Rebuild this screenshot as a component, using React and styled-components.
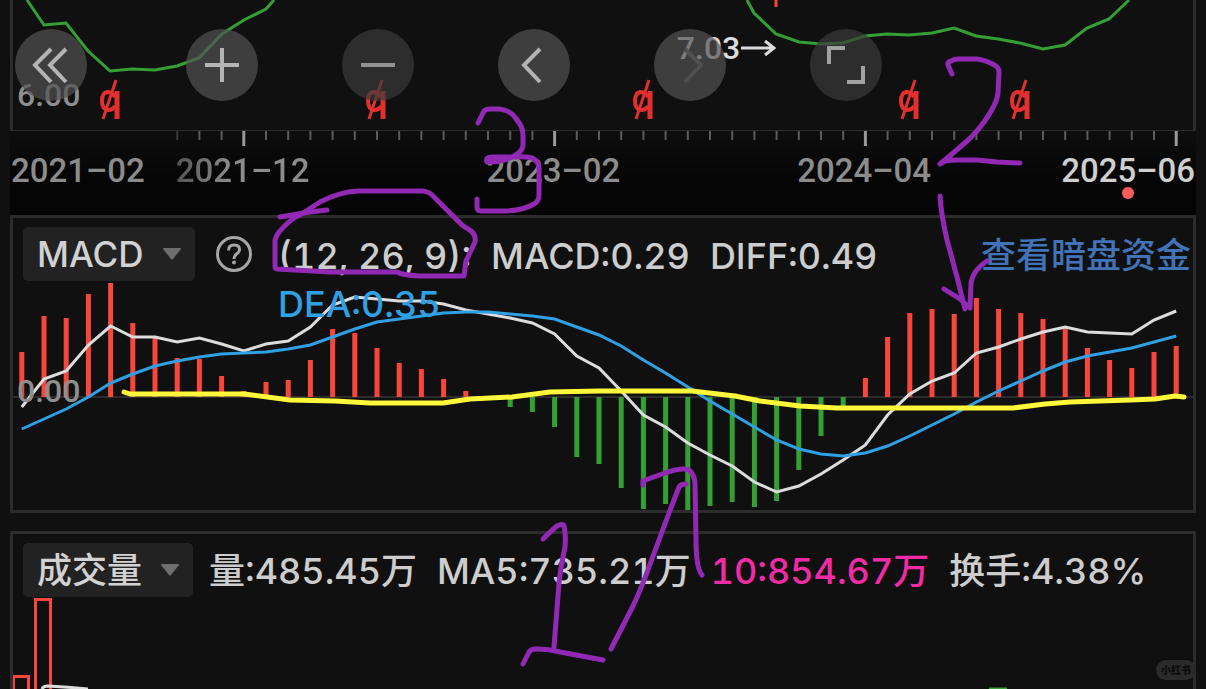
import React from 'react';
import styled, { createGlobalStyle } from 'styled-components';

const GlobalStyle = createGlobalStyle`
  * {
    box-sizing: border-box;
  }
  body {
    margin: 0;
    background: #101010;
    font-family: Inter, 'Noto Sans CJK SC', sans-serif;
  }
`;

const Page = styled.main`
  position: relative;
  display: flex;
  flex-direction: column;
  height: 100vh;
  padding: 0 10px;
  overflow: hidden;
`;

const PricePanel = styled.section`
  position: relative;
  flex: none;
  border: solid #2c2c2c;
  border-width: 0 3px 1px;
`;

const Panel = styled.section`
  display: flex;
  flex-direction: column;
  flex: ${(p) => (p.$grow ? '1 0 auto' : 'none')};
  border: 3px solid #2c2c2c;
`;

const MacdPanel = styled(Panel)`
  position: relative;
  height: 298px;
  margin-bottom: 18px;
`;

const VolumePanel = styled(Panel)`
  border-bottom: 0;
`;

const Chart = styled.svg`
  display: block;
  width: 100%;
  height: ${(p) => p.$height}px;

  path,
  line,
  rect {
    vector-effect: non-scaling-stroke;
  }
`;

const MacdChart = styled(Chart)`
  position: absolute;
  inset: 0;
`;

const AxisValue = styled.span`
  position: absolute;
  left: 4px;
  top: ${(p) => p.$top}px;
  font: 500 32px/36px Roboto, sans-serif;
  color: #8e8e8e;
`;

const LowMark = styled.div`
  position: absolute;
  left: 56%;
  top: 30px;
  display: flex;
  align-items: center;
  padding-left: 3px;
  font: 500 32px/36px Roboto, sans-serif;
  color: #dcdcdc;
`;

const Toolbar = styled.div`
  position: absolute;
  left: 2px;
  top: 29px;
  display: flex;
  gap: 84px;

  button:first-child {
    margin-right: 15px;
  }
`;

const RoundButton = styled.button`
  display: grid;
  place-items: center;
  width: 72px;
  height: 72px;
  padding: 0;
  border: 0;
  border-radius: 50%;
  background: ${(p) => (p.$dim ? 'rgba(58, 58, 58, 0.7)' : 'rgba(82, 82, 82, 0.7)')};
  color: ${(p) => p.$ink || '#b4b4b4'};
`;

const Timeline = styled.section`
  flex: none;
  height: 84px;
  background: linear-gradient(#0e0e0e, #050505 60%);
`;

const Dates = styled.div`
  display: grid;
  grid-template-columns: 165fr 311fr 311fr 264fr 134fr;
  padding: 4px 1px 0;
`;

const DateLabel = styled.time`
  position: relative;
  justify-self: ${(p) => (p.$last ? 'end' : 'start')};
  font: 500 33px/40px Roboto, sans-serif;
  white-space: nowrap;
  color: ${(p) => (p.$last ? '#cfcfcf' : '#8c8c8c')};
`;

const FadedDate = styled(DateLabel)`
  background: linear-gradient(90deg, #555, #8c8c8c 40%);
  background-clip: text;
  color: transparent;
`;

const Dot = styled.i`
  position: absolute;
  left: 50%;
  bottom: -8px;
  width: 12px;
  height: 12px;
  margin-left: -6px;
  border-radius: 50%;
  background: #ff5b5b;
`;

const PanelHeader = styled.header`
  position: relative;
  z-index: 1;
  display: flex;
  align-items: flex-start;
  padding: 9px 2px 0 10px;
`;

const Picker = styled.label`
  position: relative;
  flex: none;

  svg {
    position: absolute;
    right: 14px;
    top: 21px;
    pointer-events: none;
  }
`;

const PickerSelect = styled.select`
  appearance: none;
  display: block;
  width: ${(p) => p.$width}px;
  height: 54px;
  padding: 0 14px;
  border: 0;
  border-radius: 5px;
  background: #222;
  color: #d2d2d2;
  font: 500 35px/54px Inter, 'Noto Sans CJK SC', sans-serif;
`;

const HelpButton = styled.button`
  flex: none;
  width: 36px;
  height: 36px;
  margin: 9px 26px 0 21px;
  padding: 0;
  border: 0;
  background: none;
  color: #a6a6a6;
`;

const Legend = styled.div`
  display: flex;
  flex: 1;
  flex-wrap: wrap;
  column-gap: 20px;
  font-size: 36px;
  font-weight: 500;
  font-variant-numeric: tabular-nums;
  line-height: 48px;
  color: #cdcdcd;
`;

const MacdLegend = styled(Legend)`
  padding-top: 5px;
`;

const VolumeLegend = styled(Legend)`
  flex-wrap: nowrap;
  padding: 4px 0 0 16px;
`;

const Value = styled.span`
  white-space: nowrap;
  color: ${(p) => p.$color || 'inherit'};
`;

const FundsLink = styled.a`
  flex: none;
  font-size: 35px;
  font-weight: 500;
  line-height: 48px;
  padding-top: 4px;
  color: #4173b8;
  text-decoration: none;
`;

const Sketch = styled.svg`
  position: absolute;
  left: 0;
  top: 0;
  z-index: 2;
  width: 100%;
  height: 689px;
  pointer-events: none;

  path {
    vector-effect: non-scaling-stroke;
  }
`;

const Watermark = styled.span`
  position: absolute;
  right: 10px;
  bottom: 9px;
  z-index: 3;
  padding: 0 5px;
  border-radius: 10px;
  background: #2b2b2b;
  color: #0a0a0a;
  font-size: 10px;
  font-weight: 900;
  line-height: 20px;
`;

const STEP = 22.2;
const FIRST = 21.8;
const ZERO = 397;
const barX = (i) => FIRST + STEP * i;

const histogram = [
  352, 316, 318, 294, 283, 323, 338, 358, 359, 376, 391, 382, 380, 360, 329, 333, 348, 363,
  369, 379, 391, 397, 407, 412, 427, 457, 464, 488, 509, 504, 510, 506, 502, 507, 501, 470,
  436, 406, 378, 337, 313, 309, 314, 298, 309, 313, 319, 327, 348, 360, 368, 352, 346,
];

const diff = [
  407, 379, 371, 345, 326, 337, 337, 342, 338, 344, 351, 344, 341, 327, 305, 297, 299, 301,
  301, 304, 310, 314, 318, 323, 334, 356, 368, 391, 415, 427, 443, 455, 466, 482, 492, 486,
  474, 460, 445, 415, 394, 381, 373, 353, 347, 339, 332, 327, 332, 333, 334, 320, 311,
];

const dea = [
  429, 419, 409, 397, 383, 374, 366, 361, 357, 354, 353, 352, 349, 345, 337, 329, 322, 319,
  316, 313, 312, 312, 314, 316, 319, 327, 335, 346, 360, 373, 387, 401, 414, 427, 440, 449,
  454, 456, 453, 446, 436, 425, 414, 402, 391, 381, 371, 362, 356, 352, 348, 342, 336,
];

const toPath = (values) => values.map((y, i) => `${i ? 'L' : 'M'}${barX(i)} ${y}`).join(' ');

const rightsMarks = [110, 376, 643, 909, 1020];

const strokes = [
  // 3
  'M478 123L484 111Q486 109 490 109H499Q511 110 517 120Q523 127 523 135V145Q523 150 517 154Q506 162 487 162Q485 157 492 157H515Q530 156 534 159Q539 163 539 168V195Q539 201 534 204Q522 211 502 211H481Q477 211 477 207V199',
  // loop round the parameters
  'M327 210L310 212L280 217',
  'M300 215L320 202Q342 191 358 191H422Q429 191 434 197L452 215L462 225L471 231Q476 235 475 242L466 261L464 276H419Q402 275 397 272H330L277 269Q275 269 275 265V240Q276 236 279 232Q290 219 300 215',
  // 2
  'M952 74L948 65Q947 62 951 61Q954 59 958 59H977Q989 61 996 66Q999 68 999 72L998 93Q997 104 984 122Q975 134 967 141L952 154L940 164L945 161Q950 160 957 160H977L997 162L1020 163',
  'M940 196Q941 214 947 240L957 277L965 309',
  'M944 289L960 299L970 308L971 283Q973 270 987 261',
  // 1
  'M543 539Q552 530 557 526Q563 523 564 526Q566 535 565 547Q560 572 559 583L554 647',
  'M523 664L529 652Q531 649 536 649Q549 649 560 652L603 660',
  'M611 649L632 608Q640 592 649 567L669 513L679 487Q681 484 686 484',
  'M643 485V481Q648 479 665 473Q682 467 689 470Q695 475 695 485L696 540Q696 568 702 575',
];

function Caret() {
  return (
    <svg width="18" height="12" viewBox="0 0 18 12" aria-hidden="true">
      <path d="M1 0H17Q18 0 18 1L10 11Q9 12 8 11L0 1Q0 0 1 0Z" fill="#6e6e6e" />
    </svg>
  );
}

function Glyph({ d, width = 4 }) {
  return (
    <svg width="72" height="72" viewBox="0 0 72 72" fill="none" stroke="currentColor" strokeWidth={width}>
      <path d={d} />
    </svg>
  );
}

function Price() {
  return (
    <PricePanel>
      <Chart $height={130} viewBox="13 0 1180 130" preserveAspectRatio="none" fill="none">
        <path
          stroke="#34a034"
          strokeWidth="3"
          d="M27 0L44 25L66 23L88 51L110 71L132 69L155 70L177 66L199 58L222 34L244 20L266 9L274 0M747 0L754 13L776 34L799 42L821 44L843 43L865 36L887 34L909 35L932 33L954 28L976 36L998 39L1020 43L1043 49L1065 45L1087 28L1109 19L1129 0"
        />
        <path stroke="#f5443a" strokeWidth="3" d="M776 0V7" />
        {rightsMarks.map((x) => (
          <g key={x} stroke="#e3302f">
            <path d={`M${x + 7} 91V119`} strokeWidth="5" />
            <path
              d={`M${x + 5} 97Q${x + 2} 92 ${x - 3} 92Q${x - 8} 93 ${x - 8} 101Q${x - 8} 109 ${x - 2} 110Q${x + 3} 110 ${x + 5} 106`}
              strokeWidth="4"
            />
            <path d={`M${x + 6} 80L${x - 7} 119`} strokeWidth="3" />
          </g>
        ))}
      </Chart>
      <AxisValue $top={77}>6.00</AxisValue>
      <LowMark>
        7.03
        <svg width="36" height="20" viewBox="0 0 36 20" fill="none" stroke="currentColor" strokeWidth="3">
          <path d="M1 10H34M25 3L34 10L25 17" />
        </svg>
      </LowMark>
      <Toolbar>
        <RoundButton aria-label="Jump back">
          <Glyph d="M36 20L20 36L36 53M51 20L35 36L51 53" />
        </RoundButton>
        <RoundButton aria-label="Zoom in">
          <Glyph d="M19 36H53M36 19V53" />
        </RoundButton>
        <RoundButton aria-label="Zoom out" $dim $ink="#929292">
          <Glyph d="M19 36H53" />
        </RoundButton>
        <RoundButton aria-label="Previous">
          <Glyph d="M42 20L26 36L42 53" />
        </RoundButton>
        <RoundButton aria-label="Next" $ink="#505050">
          <Glyph d="M31 20L47 36L31 53" />
        </RoundButton>
        <RoundButton aria-label="Full screen" $dim $ink="#a2a2a2">
          <Glyph d="M19 35V19H35M53 37V53H37" />
        </RoundButton>
      </Toolbar>
    </PricePanel>
  );
}

function TimeAxis() {
  const ticks = [];
  for (let i = 7; i <= 52; i += 1) {
    const major = i % 14 === 10;
    ticks.push(
      <line
        key={i}
        x1={barX(i)}
        x2={barX(i)}
        y1="0"
        y2={major ? 15 : 9}
        stroke={major ? '#9a9a9a' : i === 7 ? '#3a3a3a' : '#5c5c5c'}
        strokeWidth={major ? 3 : 2}
      />
    );
  }
  return (
    <Timeline>
      <Chart $height={16} viewBox="10 0 1186 16" preserveAspectRatio="none">
        {ticks}
      </Chart>
      <Dates>
        <DateLabel>2021–02</DateLabel>
        <FadedDate>2021–12</FadedDate>
        <DateLabel>2023–02</DateLabel>
        <DateLabel>2024–04</DateLabel>
        <DateLabel $last>
          2025–06
          <Dot />
        </DateLabel>
      </Dates>
    </Timeline>
  );
}

function Macd() {
  return (
    <MacdPanel>
      <MacdChart $height={292} viewBox="13 218 1180 292" preserveAspectRatio="none" fill="none">
        <line x1="13" x2="1193" y1="397" y2="397" stroke="#2c2c2c" strokeWidth="2" />
        {histogram.map((y, i) => (
          <rect
            key={i}
            x={barX(i) - 2.5}
            y={Math.min(y, ZERO)}
            width="5"
            height={Math.abs(y - ZERO)}
            fill={y < ZERO ? '#f9463a' : '#34a034'}
          />
        ))}
        <path d={toPath(diff)} stroke="#dcdcdc" strokeWidth="3" />
        <path d={toPath(dea)} stroke="#2fa0e4" strokeWidth="3" />
      </MacdChart>
      <AxisValue $top={155}>0.00</AxisValue>
      <PanelHeader>
        <Picker>
          <PickerSelect $width={172} aria-label="Indicator" defaultValue="MACD">
            <option>MACD</option>
          </PickerSelect>
          <Caret />
        </Picker>
        <HelpButton aria-label="Help">
          <svg width="36" height="36" viewBox="0 0 36 36" fill="none" stroke="currentColor" strokeWidth="3">
            <circle cx="18" cy="18" r="16.5" />
            <path d="M12.500 14.500Q12.500 9 18 9Q23.500 9 23.500 13.500Q23.500 16 20.500 18Q18 20 18 23" />
            <circle cx="18" cy="26.500" r="2" fill="currentColor" stroke="none" />
          </svg>
        </HelpButton>
        <MacdLegend>
          <Value>(12, 26, 9):</Value>
          <Value>MACD:0.29</Value>
          <Value>DIFF:0.49</Value>
          <Value $color="#2fa0e4">DEA:0.35</Value>
        </MacdLegend>
        <FundsLink href="#funds">查看暗盘资金</FundsLink>
      </PanelHeader>
    </MacdPanel>
  );
}

function Volume() {
  return (
    <VolumePanel $grow>
      <PanelHeader>
        <Picker>
          <PickerSelect $width={170} aria-label="Volume indicator" defaultValue="成交量">
            <option>成交量</option>
          </PickerSelect>
          <Caret />
        </Picker>
        <VolumeLegend>
          <Value>量:485.45万</Value>
          <Value>MA5:735.21万</Value>
          <Value $color="#f02ba5">10:854.67万</Value>
          <Value>换手:4.38%</Value>
        </VolumeLegend>
      </PanelHeader>
      <Chart $height={92} viewBox="13 597 1180 92" preserveAspectRatio="none" fill="none">
        <rect x="13.500" y="676.500" width="15" height="30" stroke="#f9463a" strokeWidth="3" />
        <rect x="35.500" y="599.500" width="15" height="100" stroke="#f9463a" strokeWidth="3" />
        <path d="M42 689Q43 686 48 686Q68 687 88 689" stroke="#dcdcdc" strokeWidth="3" />
        <path d="M989 688.500H1007" stroke="#34a034" strokeWidth="2" />
      </Chart>
    </VolumePanel>
  );
}

export default function App() {
  return (
    <Page>
      <GlobalStyle />
      <Price />
      <TimeAxis />
      <Macd />
      <Volume />
      <Sketch viewBox="0 0 1206 689" preserveAspectRatio="none" fill="none" strokeLinecap="round" strokeLinejoin="round">
        <path
          d="M124 392L130 394H244L290 400L335 401L370 403H443L470 399L512 397L550 392L600 391H692L735 396L760 401L800 406L837 408H1013L1045 404L1070 402L1130 400L1155 399L1175 396L1184 397"
          stroke="#fff83a"
          strokeWidth="5"
        />
        {strokes.map((d) => (
          <path key={d} d={d} stroke="#9229b5" strokeWidth="5" />
        ))}
      </Sketch>
      <Watermark>小红书</Watermark>
    </Page>
  );
}
